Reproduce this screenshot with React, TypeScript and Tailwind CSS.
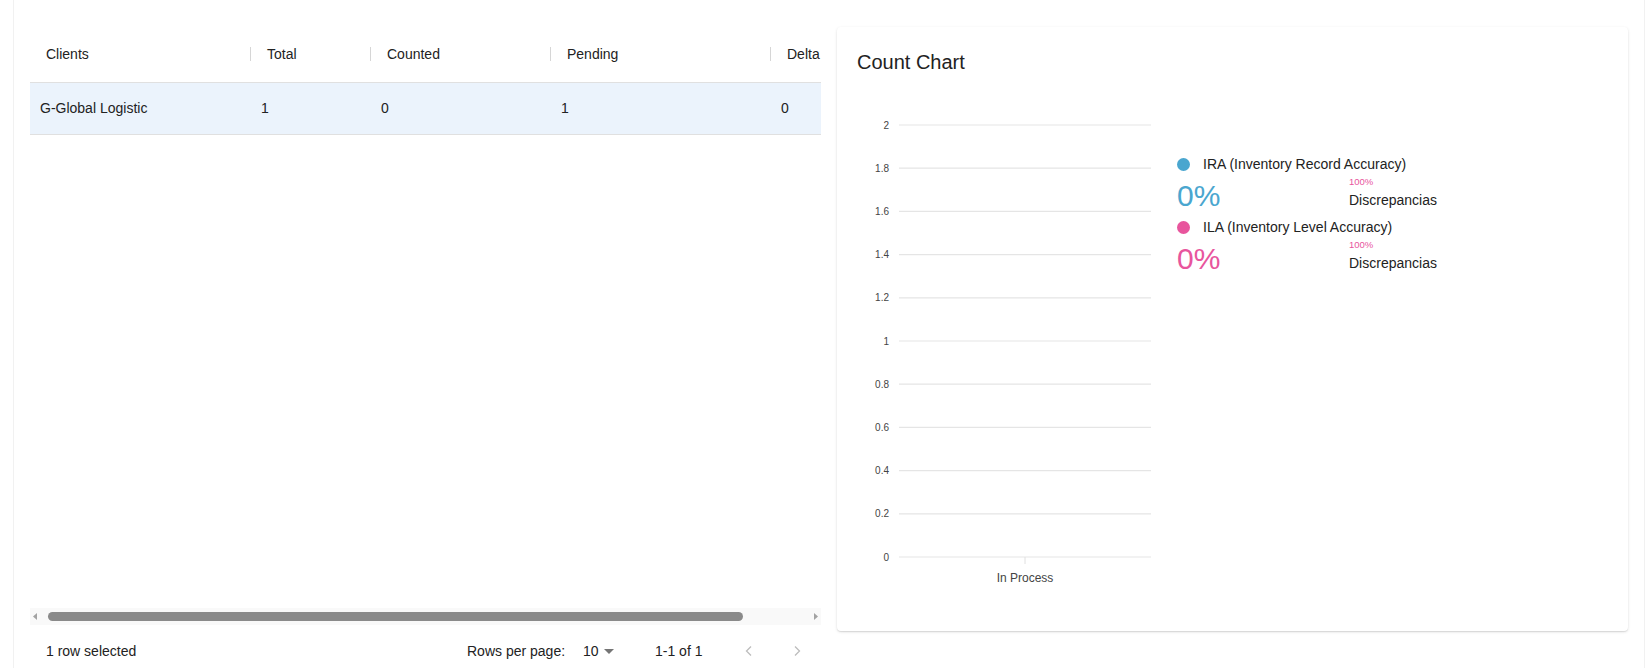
import React from "react";

const columns = [
  { key: "client", label: "Clients", width: "w-[221px]" },
  { key: "total", label: "Total", width: "w-[120px]" },
  { key: "counted", label: "Counted", width: "w-[180px]" },
  { key: "pending", label: "Pending", width: "w-[220px]" },
  { key: "delta", label: "Delta", width: "w-[150px]" },
];

const rows = [{ client: "G-Global Logistic", total: 1, counted: 0, pending: 1, delta: 0 }];

const ticks = ["2", "1.8", "1.6", "1.4", "1.2", "1", "0.8", "0.6", "0.4", "0.2", "0"];

const CountChart: React.FC = () => (
  <svg width={300} height={490} className="shrink-0">
    {ticks.map((t, i) => {
      const y = 25 + i * 43.2;
      return (
        <g key={t}>
          <line x1={42} x2={294} y1={y} y2={y} stroke="#e5e5e5" strokeWidth={1.2} />
          <text x={32} y={y + 3.5} textAnchor="end" fontSize={10} fill="#444">
            {t}
          </text>
        </g>
      );
    })}
    <line x1={168} x2={168} y1={457} y2={464} stroke="#e0e0e0" strokeWidth={1} />
    <text x={168} y={482} textAnchor="middle" fontSize={12} fill="#444">
      In Process
    </text>
  </svg>
);

const LegendItem: React.FC<{ label: string; color: string; text: string; className?: string }> = ({
  label,
  color,
  text,
  className,
}) => (
  <div className={className}>
    <div className="flex items-center h-5">
      <span className={`w-[13px] h-[13px] rounded-full ${color}`} />
      <span className="ml-[13px] text-[14px] leading-5 text-[#222]">{label}</span>
    </div>
    <div className="flex">
      <div className={`w-[172px] mt-[7px] text-[30px] leading-[30px] ${text}`}>0%</div>
      <div className="pt-[2px]">
        <div className="text-[9.5px] leading-[12px] text-[#e8559d]">100%</div>
        <div className="mt-[2px] text-[14px] leading-5 text-[#222]">Discrepancias</div>
      </div>
    </div>
  </div>
);

export default function App() {
  return (
    <div className="w-[1649px] h-[668px] overflow-hidden bg-white font-['Liberation_Sans',Arial,sans-serif]">
      <div className="ml-[13px] w-[1632px] h-[668px] border-x border-[#f1f1f1] px-4 pt-[26px] flex gap-4">
        {/* table */}
        <div className="w-[791px] shrink-0 flex flex-col">
          <div className="h-[582px] shrink-0 overflow-hidden">
            <div className="flex h-[57px] border-b border-[#e0e0e0] w-[891px]">
              {columns.map((c, i) => (
                <div key={c.key} className={`${c.width} shrink-0 flex items-center relative`}>
                  <span className="pl-4 text-[14px] text-[#222]">{c.label}</span>
                  {i < columns.length - 1 && (
                    <span className="absolute right-0 top-[21px] w-px h-[14px] bg-[#d6d6d6]" />
                  )}
                </div>
              ))}
            </div>
            {rows.map((r) => (
              <div key={r.client} className="flex h-[52px] border-b border-[#e0e0e0] bg-[#ebf3fc] w-[891px]">
                {columns.map((c) => (
                  <div key={c.key} className={`${c.width} shrink-0 flex items-center pl-[10px] text-[14px] text-[#222]`}>
                    {String(r[c.key as keyof typeof r])}
                  </div>
                ))}
              </div>
            ))}
          </div>
          {/* horizontal scrollbar */}
          <div className="h-[17px] shrink-0 flex items-center bg-[#f9f9f9]">
            <svg width={17} height={17} className="shrink-0">
              <polygon points="3,8.5 7,5 7,12" fill="#a3a3a3" />
            </svg>
            <div className="ml-px w-[695px] h-[9px] rounded-full bg-[#8a8a8a]" />
            <svg width={17} height={17} className="ml-auto shrink-0">
              <polygon points="14,8.5 10,5 10,12" fill="#a3a3a3" />
            </svg>
          </div>
          {/* footer */}
          <div className="h-[52px] shrink-0 flex items-center text-[14px] text-[#222]">
            <div className="w-[437px] pl-4">1 row selected</div>
            <div className="w-[188px] flex items-center">
              <span>Rows per page:</span>
              <span className="ml-[18px]">10</span>
              <svg width={12} height={12} className="ml-[4px]" viewBox="0 0 12 12">
                <polygon points="1,4 11,4 6,9" fill="#757575" />
              </svg>
            </div>
            <span>1-1 of 1</span>
            <svg width={20} height={20} className="ml-[37px]" viewBox="0 0 20 20">
              <polyline points="12,5.5 7.5,10 12,14.5" fill="none" stroke="#bdbdbd" strokeWidth={1.3} />
            </svg>
            <svg width={20} height={20} className="ml-[28px]" viewBox="0 0 20 20">
              <polyline points="8,5.5 12.5,10 8,14.5" fill="none" stroke="#bdbdbd" strokeWidth={1.3} />
            </svg>
          </div>
        </div>

        {/* chart card */}
        <div className="w-[791px] h-[604px] mt-px shrink-0 rounded bg-white shadow-[0_1px_3px_rgba(0,0,0,0.12),0_1px_1px_rgba(0,0,0,0.08)] px-5 pt-[21px]">
          <h2 className="text-[20px] leading-[28px] text-[#222]">Count Chart</h2>
          <div className="mt-6 flex">
            <CountChart />
            <div className="ml-5 mt-[54px]">
              <LegendItem label="IRA (Inventory Record Accuracy)" color="bg-[#4aa6cf]" text="text-[#4aa6cf]" />
              <LegendItem
                label="ILA (Inventory Level Accuracy)"
                color="bg-[#e8559d]"
                text="text-[#e8559d]"
                className="mt-[6px]"
              />
            </div>
          </div>
        </div>
      </div>
    </div>
  );
}
